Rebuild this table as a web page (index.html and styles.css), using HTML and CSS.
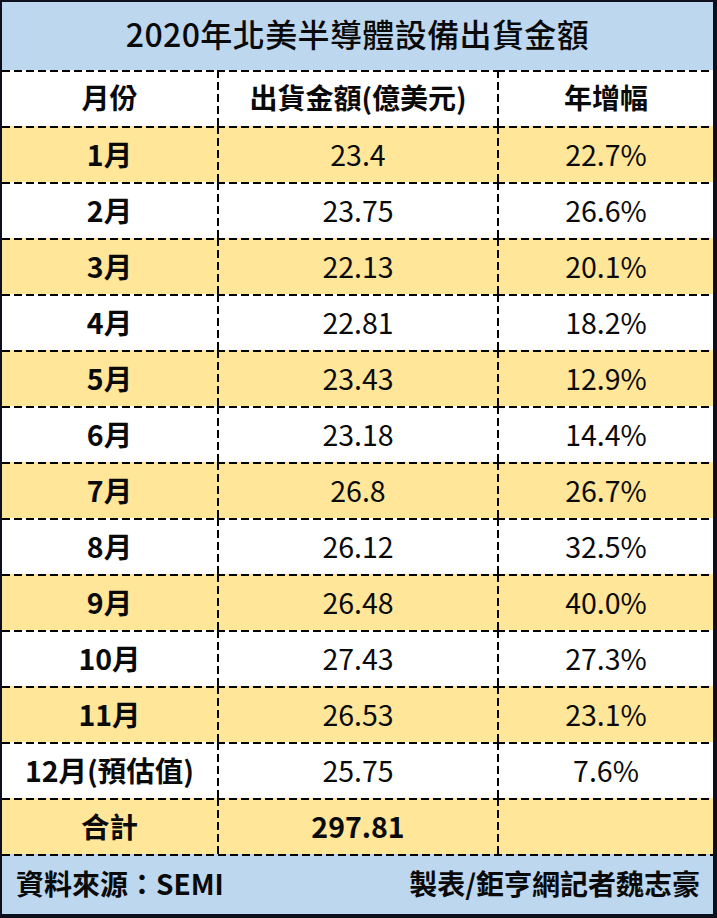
FILE: index.html
```html
<!DOCTYPE html>
<html lang="zh-Hant">
<head>
<meta charset="utf-8">
<title>2020年北美半導體設備出貨金額</title>
<link rel="stylesheet" href="styles.css">
</head>
<body>
<div class="frame">
  <div class="title">2020年北美半導體設備出貨金額</div>
  <div class="table">
    <div class="row head">
      <div class="cell c1">月份</div><div class="cell c2 bold">出貨金額(億美元)</div><div class="cell c3 bold">年增幅</div>
    </div>
    <div class="row y"><div class="cell c1">1月</div><div class="cell c2">23.4</div><div class="cell c3">22.7%</div></div>
    <div class="row"><div class="cell c1">2月</div><div class="cell c2">23.75</div><div class="cell c3">26.6%</div></div>
    <div class="row y"><div class="cell c1">3月</div><div class="cell c2">22.13</div><div class="cell c3">20.1%</div></div>
    <div class="row"><div class="cell c1">4月</div><div class="cell c2">22.81</div><div class="cell c3">18.2%</div></div>
    <div class="row y"><div class="cell c1">5月</div><div class="cell c2">23.43</div><div class="cell c3">12.9%</div></div>
    <div class="row"><div class="cell c1">6月</div><div class="cell c2">23.18</div><div class="cell c3">14.4%</div></div>
    <div class="row y"><div class="cell c1">7月</div><div class="cell c2">26.8</div><div class="cell c3">26.7%</div></div>
    <div class="row"><div class="cell c1">8月</div><div class="cell c2">26.12</div><div class="cell c3">32.5%</div></div>
    <div class="row y"><div class="cell c1">9月</div><div class="cell c2">26.48</div><div class="cell c3">40.0%</div></div>
    <div class="row"><div class="cell c1">10月</div><div class="cell c2">27.43</div><div class="cell c3">27.3%</div></div>
    <div class="row y"><div class="cell c1">11月</div><div class="cell c2">26.53</div><div class="cell c3">23.1%</div></div>
    <div class="row"><div class="cell c1">12月(預估值)</div><div class="cell c2">25.75</div><div class="cell c3">7.6%</div></div>
    <div class="row y total"><div class="cell c1">合計</div><div class="cell c2 bold">297.81</div><div class="cell c3"></div></div>
  </div>
  <div class="footer">
    <span class="src">資料來源：SEMI</span>
    <span class="credit">製表/鉅亨網記者魏志豪</span>
  </div>
</div>
</body>
</html>
```

FILE: styles.css
```css
html, body {
  margin: 0;
  padding: 0;
  background: #ffffff;
}

.frame {
  box-sizing: border-box;
  width: 717px;
  height: 918px;
  border-style: solid;
  border-color: #0e0f1c;
  border-width: 2px 4px 4px 2px;
  display: flex;
  flex-direction: column;
  font-family: "Noto Sans CJK TC", "Noto Sans", sans-serif;
  color: #0a0a0a;
}

.title {
  box-sizing: border-box;
  height: 68px;
  padding-bottom: 6px;
  background: #bdd7ee;
  display: flex;
  align-items: center;
  justify-content: center;
  font-size: 32px;
  font-weight: 500;
  letter-spacing: 0.4px;
}

.table {
  display: flex;
  flex-direction: column;
}

.row {
  display: grid;
  grid-template-columns: 215px 280px 216px;
  height: 56px;
  background: #ffffff;
}

.row.y {
  background: #ffe699;
}

.cell {
  box-sizing: border-box;
  padding-bottom: 2px;
  display: flex;
  align-items: center;
  justify-content: center;
  font-size: 28.5px;
  font-weight: 400;
  background-image: repeating-linear-gradient(90deg, #000 0 8px, transparent 8px 12px);
  background-size: 100% 2px;
  background-position: left top;
  background-repeat: no-repeat;
}

.c1 {
  font-size: 28.5px;
  font-weight: 700;
}

.c2, .c3 {
  padding-left: 2px;
  background-image:
    repeating-linear-gradient(90deg, #000 0 8px, transparent 8px 12px),
    repeating-linear-gradient(180deg, #000 0 8px, transparent 8px 12px);
  background-size: 100% 2px, 2px 100%;
  background-position: left top, left top;
  background-repeat: no-repeat, no-repeat;
}

.head .cell {
  font-size: 28px;
}

.bold {
  font-weight: 700;
}

.footer {
  flex: 1;
  box-sizing: border-box;
  padding: 0 13px 2px 14px;
  background-color: #bdd7ee;
  background-image: repeating-linear-gradient(90deg, #000 0 8px, transparent 8px 12px);
  background-size: 100% 2px;
  background-position: left top;
  background-repeat: no-repeat;
  display: flex;
  align-items: center;
  justify-content: space-between;
  font-size: 28px;
  font-weight: 700;
}
```
